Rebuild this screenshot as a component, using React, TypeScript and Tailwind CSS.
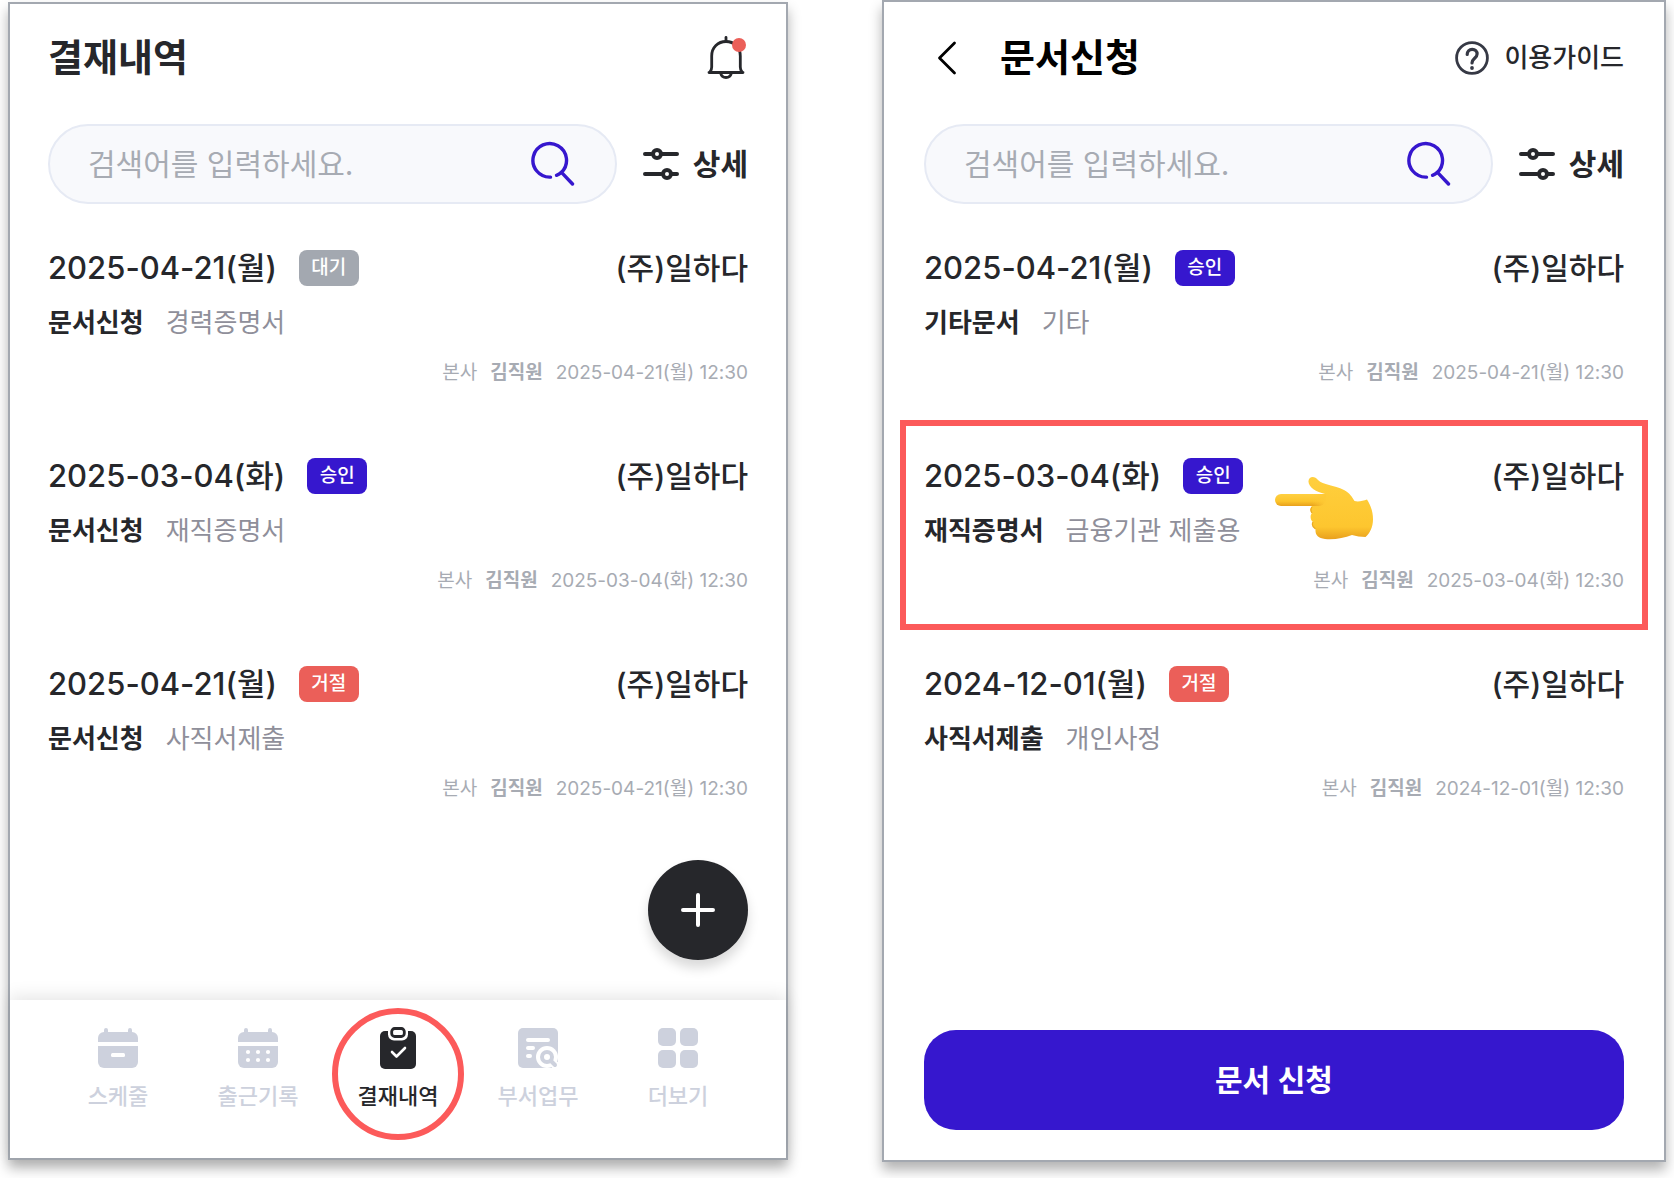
import React from 'react';

type Status = '대기' | '승인' | '거절';

interface Approval {
  id: number;
  date: string;
  status: Status;
  title: string;
  detail: string;
  requestedAt: string;
  highlighted?: boolean;
}

const approvals: Approval[] = [
  { id: 1, date: '2025-04-21(월)', status: '대기', title: '문서신청', detail: '경력증명서', requestedAt: '2025-04-21(월) 12:30' },
  { id: 2, date: '2025-03-04(화)', status: '승인', title: '문서신청', detail: '재직증명서', requestedAt: '2025-03-04(화) 12:30' },
  { id: 3, date: '2025-04-21(월)', status: '거절', title: '문서신청', detail: '사직서제출', requestedAt: '2025-04-21(월) 12:30' },
];

const documents: Approval[] = [
  { id: 1, date: '2025-04-21(월)', status: '승인', title: '기타문서', detail: '기타', requestedAt: '2025-04-21(월) 12:30' },
  { id: 2, date: '2025-03-04(화)', status: '승인', title: '재직증명서', detail: '금융기관 제출용', requestedAt: '2025-03-04(화) 12:30', highlighted: true },
  { id: 3, date: '2024-12-01(월)', status: '거절', title: '사직서제출', detail: '개인사정', requestedAt: '2024-12-01(월) 12:30' },
];

const badgeColors: Record<Status, string> = {
  대기: 'bg-[#a3a8b0]',
  승인: 'bg-[#3617ce]',
  거절: 'bg-[#eb5f59]',
};

const BellIcon = () => (
  <svg width="44" height="48" viewBox="0 0 44 48" fill="none" stroke="#26272b" strokeWidth="2.8" strokeLinecap="round" strokeLinejoin="round">
    <path d="M22 3.5v4" />
    <path d="M5 38.5h34M6 38c1.3-1.5 1.7-3 1.7-5V22C7.7 13.5 14 7.5 22 7.5S36.300 13.5 36.300 22V33c0 2 .4 3.5 1.7 5" />
    <path d="M16.5 39c.8 3 2.8 4.5 5.5 4.5s4.7-1.500 5.5-4.5" />
    <circle cx="35" cy="11" r="7" fill="#eb5f59" stroke="none" />
  </svg>
);

const SearchIcon = () => (
  <svg width="48" height="48" viewBox="0 0 48 48" fill="none" stroke="#3617ce" strokeWidth="3.4" strokeLinecap="round" strokeLinejoin="round">
    <path d="M21.5 37.1A16.8 16.8 0 1 1 32.5 32.3L43.500 44" />
    <path d="M32.5 32.3C31 33.7 29.5 34.6 27.5 35.3" />
  </svg>
);

const FilterIcon = () => (
  <svg width="40" height="40" viewBox="0 0 40 40" fill="none" stroke="#26272b" strokeWidth="4" strokeLinecap="round">
    <path d="M4 10h6M20 10h16M4 30h16M30 30h6" />
    <circle cx="16" cy="10" r="4" />
    <circle cx="26" cy="30" r="4" />
  </svg>
);

const HelpIcon = () => (
  <svg width="40" height="40" viewBox="0 0 40 40" fill="none" stroke="#363945" strokeWidth="2.8" strokeLinecap="round" strokeLinejoin="round">
    <circle cx="20" cy="20" r="15.4" />
    <path strokeWidth="3.2" d="M15.200 16.500c0-3 2-5.200 5-5.200s4.900 2 4.900 4.700c0 4.300-5.100 4.200-5.100 9" />
    <circle cx="20" cy="30" r="1.9" fill="#363945" stroke="none" />
  </svg>
);

const HandIcon = () => (
  <svg width="100" height="66" viewBox="0 0 100 66">
    <defs>
      <linearGradient id="palm" x1="0" y1="0" x2="0" y2="1">
        <stop offset="0" stopColor="#ffcf3d" />
        <stop offset="0.8" stopColor="#fdc62f" />
        <stop offset="1" stopColor="#e9a01d" />
      </linearGradient>
      <linearGradient id="finger" x1="0" y1="0" x2="0" y2="1">
        <stop offset="0" stopColor="#ffd041" />
        <stop offset="0.6" stopColor="#fcc42c" />
        <stop offset="1" stopColor="#e8a01c" />
      </linearGradient>
      <linearGradient id="finger-blend" x1="0" y1="0" x2="1" y2="0">
        <stop offset="0" stopColor="#fec935" stopOpacity="0" />
        <stop offset="1" stopColor="#fec935" />
      </linearGradient>
    </defs>
    <path
      d="M51 18C42 16 34 11 34.500 5C35 0 41 0 44 4C49 9 60 9 70 14C76 17 78 21 80.500 25C84 26 89 25 93 23.500C96 28 99 35 99 43C99 51 96 57 91.500 61C87 61 82 60 78 59C70 62 60 64 51 63C44 62 41 59 41.500 53C39 51 38 48 39 46C36 44 36 39 38 37C36 35 36 32 38 30L44 18Z"
      fill="url(#palm)"
    />
    <rect x="1" y="18" width="50" height="12" rx="6" fill="url(#finger)" />
    <rect x="38" y="18" width="14" height="12" fill="url(#finger-blend)" />
    <path d="M38 31c-1.500 2-1.500 4 0 6M39 46c-1 2-.5 5 2.500 7" fill="none" stroke="#eba920" strokeWidth="1.200" />
  </svg>
);

const ScheduleIcon = () => (
  <svg width="40" height="40" viewBox="0 0 40 40" fill="#cdd1dd">
    <path d="M6 4V2a2 2 0 0 1 4 0v2h20V2a2 2 0 0 1 4 0v2a6 6 0 0 1 6 6v4H0v-4a6 6 0 0 1 6-6Z" />
    <path d="M0 18h40v16a6 6 0 0 1-6 6H6a6 6 0 0 1-6-6Z" />
    <rect x="13" y="25" width="14" height="4" rx="1.5" fill="#fff" />
  </svg>
);

const AttendanceIcon = () => (
  <svg width="40" height="40" viewBox="0 0 40 40" fill="#cdd1dd">
    <path d="M6 4V2a2 2 0 0 1 4 0v2h20V2a2 2 0 0 1 4 0v2a6 6 0 0 1 6 6v4H0v-4a6 6 0 0 1 6-6Z" />
    <path d="M0 18h40v16a6 6 0 0 1-6 6H6a6 6 0 0 1-6-6Z" />
    {[10, 20, 30].map((x) => (
      <g key={x} fill="#fff">
        <circle cx={x} cy="24" r="2.1" />
        <circle cx={x} cy="32" r="2.1" />
      </g>
    ))}
  </svg>
);

const ApprovalIcon = () => (
  <svg width="40" height="42" viewBox="0 0 40 42" fill="none">
    <rect x="2" y="4" width="36" height="38" rx="5" fill="#26272b" />
    <rect x="10" y="-2" width="20" height="15.5" rx="6" fill="#fff" />
    <rect x="13.7" y="1.5" width="12.600" height="8" rx="3" stroke="#26272b" strokeWidth="2.800" />
    <path d="M14 25l4.500 4.500 8.500-8.500" stroke="#fff" strokeWidth="2.600" strokeLinecap="round" strokeLinejoin="round" />
  </svg>
);

const TeamWorkIcon = () => (
  <svg width="40" height="40" viewBox="0 0 40 40" fill="none">
    <rect width="40" height="40" rx="5" fill="#cdd1dd" />
    <path d="M10 12h20M10 20h5M10 28h2" stroke="#fff" strokeWidth="4" strokeLinecap="round" />
    <circle cx="29" cy="29" r="11" fill="#fff" />
    <path d="M33 33l6 6" stroke="#fff" strokeWidth="8" />
    <circle cx="29" cy="29" r="5" stroke="#cdd1dd" strokeWidth="4" />
    <path d="M33 33l4 4" stroke="#cdd1dd" strokeWidth="4" strokeLinecap="round" />
  </svg>
);

const MoreIcon = () => (
  <svg width="40" height="40" viewBox="0 0 40 40" fill="#cdd1dd">
    <rect width="18" height="18" rx="5" />
    <rect x="22" width="18" height="18" rx="5" />
    <rect y="22" width="18" height="18" rx="5" />
    <rect x="22" y="22" width="18" height="18" rx="5" />
  </svg>
);

const navItems = [
  { label: '스케줄', icon: ScheduleIcon },
  { label: '출근기록', icon: AttendanceIcon },
  { label: '결재내역', icon: ApprovalIcon, active: true },
  { label: '부서업무', icon: TeamWorkIcon },
  { label: '더보기', icon: MoreIcon },
];

const SearchBar: React.FC = () => (
  <div className="flex items-center gap-6">
    <div className="flex h-20 min-w-0 flex-1 items-center rounded-full border-2 border-[#e6eaf4] bg-[#f8f9fc] px-[38px]">
      <input
        type="text"
        aria-label="검색어"
        placeholder="검색어를 입력하세요."
        className="h-full min-w-0 flex-1 bg-transparent text-[30px] text-[#26272b] outline-none placeholder:text-[#a7abb3]"
      />
      <button type="button" aria-label="검색">
        <SearchIcon />
      </button>
    </div>
    <button type="button" className="flex items-center gap-3 text-[30px] leading-10 font-semibold">
      <FilterIcon />
      상세
    </button>
  </div>
);

const ApprovalRow: React.FC<{ item: Approval }> = ({ item }) => (
  <li className="relative pb-16 last:pb-8">
    <div className="flex h-12 items-center justify-between text-[30px] font-medium">
      <div className="flex items-center gap-[22px]">
        <span className="text-[31px]">{item.date}</span>
        <span className={`flex h-9 w-15 items-center justify-center rounded-lg text-[19px] text-white ${badgeColors[item.status]}`}>
          {item.status}
        </span>
      </div>
      <span>(주)일하다</span>
    </div>
    <div className="mt-[10px] flex h-10 items-center gap-[22px] text-[26px]">
      <strong className="font-semibold">{item.title}</strong>
      <span className="text-[#8f8f9a]">{item.detail}</span>
    </div>
    <div className="mt-[14px] flex h-8 items-end justify-end gap-[13px] text-[19px] leading-[30px] text-[#a7abb3]">
      <span>본사</span>
      <span className="font-semibold">김직원</span>
      <span>{item.requestedAt}</span>
    </div>
    {item.highlighted && (
      <>
        <div className="pointer-events-none absolute -inset-x-6 -top-8 bottom-[30px] border-6 border-[#fc5a5a]" />
        <div className="pointer-events-none absolute top-6 left-1/2">
          <HandIcon />
        </div>
      </>
    )}
  </li>
);

const ApprovalList: React.FC<{ items: Approval[] }> = ({ items }) => (
  <ul className="mt-10">
    {items.map((item) => (
      <ApprovalRow key={item.id} item={item} />
    ))}
  </ul>
);

const App: React.FC = () => {
  return (
    <div className="grid min-h-screen grid-cols-[780fr_784fr] gap-[94px] bg-white px-2 font-[Inter,'Noto_Sans_CJK_KR',sans-serif] text-[#26272b]">
      {/* 결재내역 */}
      <section className="mt-[2px] mb-[18px] flex min-w-0 flex-col border-2 border-[#a3a8b0] bg-white shadow-[0_8px_12px_rgba(0,0,0,0.3)]">
        <div className="flex flex-1 flex-col px-[38px]">
          <header className="flex h-[120px] items-center justify-between pb-3">
            <h1 className="pb-[2px] text-[38px] font-bold">결재내역</h1>
            <button type="button" aria-label="알림">
              <BellIcon />
            </button>
          </header>
          <SearchBar />
          <ApprovalList items={approvals} />
          <button
            type="button"
            aria-label="추가"
            className="mt-auto mb-10 flex size-[100px] items-center justify-center self-end rounded-full bg-[#26272b] shadow-[0_8px_12px_rgba(0,0,0,0.15)]"
          >
            <svg width="36" height="36" viewBox="0 0 36 36" stroke="#fff" strokeWidth="4" strokeLinecap="round">
              <path d="M18 3v30M3 18h30" />
            </svg>
          </button>
        </div>
        <nav className="flex h-[158px] px-[38px] pt-7 shadow-[0_-4px_16px_rgba(0,0,0,0.1)]">
          {navItems.map(({ label, icon: Icon, active }) => (
            <a
              key={label}
              href="#"
              className={`relative flex flex-1 flex-col items-center text-[22px] font-medium ${active ? 'text-[#26272b]' : 'text-[#cdd1dd]'}`}
            >
              <span className="flex h-10 items-center">
                <Icon />
              </span>
              <span className="mt-3 leading-8">{label}</span>
              {active && (
                <span className="pointer-events-none absolute -top-5 left-1/2 size-[132px] -translate-x-1/2 rounded-full border-6 border-[#fc5a5a]" />
              )}
            </a>
          ))}
        </nav>
      </section>

      {/* 문서신청 */}
      <section className="mb-4 flex min-w-0 flex-col border-2 border-[#a3a8b0] bg-white px-10 pb-[30px] shadow-[0_8px_12px_rgba(0,0,0,0.3)]">
        <header className="flex h-[122px] items-center justify-between pb-[10px]">
          <div className="flex items-center gap-9 text-black">
            <button type="button" aria-label="뒤로">
              <svg width="40" height="40" viewBox="0 0 40 40" fill="none" stroke="currentColor" strokeWidth="2.8" strokeLinecap="round" strokeLinejoin="round">
                <path d="M30.500 5L15.500 20l15 15" />
              </svg>
            </button>
            <h1 className="pb-[2px] text-[38px] font-bold">문서신청</h1>
          </div>
          <a href="#" className="flex items-center gap-3 text-[26px] font-medium">
            <HelpIcon />
            <span className="pb-[2px]">이용가이드</span>
          </a>
        </header>
        <SearchBar />
        <ApprovalList items={documents} />
        <button type="button" className="mt-auto h-[100px] rounded-[32px] bg-[#3617ce] text-[30px] font-semibold text-white">
          문서 신청
        </button>
      </section>
    </div>
  );
};

export default App;
